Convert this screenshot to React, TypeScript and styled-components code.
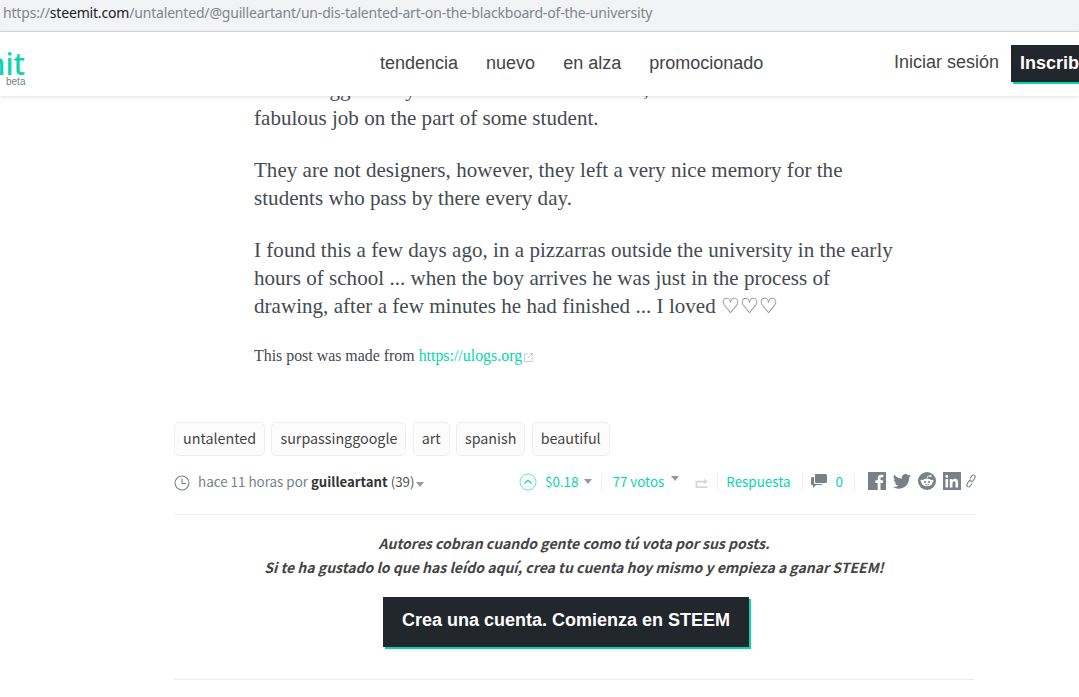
import React from 'react';
import styled, { createGlobalStyle } from 'styled-components';

const Global = createGlobalStyle`
  html, body { margin: 0; padding: 0; height: 100%; background: #fff; overflow: hidden; }
  #root { height: 697px; overflow: hidden; }
  * { box-sizing: border-box; }
`;
const Shell = styled.div`width: 1079px; height: 697px; position: relative; overflow: hidden;`;
const UrlBar = styled.div`
  height: 32px; background: #f1f3f4; border-bottom: 1px solid #d3d6e0;
  padding: 3px 0 0 3px; font: 14px/20px "Noto Sans", sans-serif; letter-spacing: -0.18px; color: #80868b; white-space: nowrap;
  b { font-weight: 400; color: #202124; }
`;
const Head = styled.header`
  position: absolute; left: 0; right: 0; top: 32px; height: 64px; background: #fff;
  box-shadow: 0 1px 4px rgba(0,0,0,.12); display: flex; align-items: center; z-index: 2;
  font-family: "Liberation Sans", sans-serif;
`;
const Logo = styled.div`
  width: 380px; flex: none; position: relative; align-self: stretch;
`;
const LogoWord = styled.span`
  position: absolute; right: 355px; top: 20px; font: 500 30px/24px "Noto Sans", sans-serif; color: #06d6a9;
`;
const Beta = styled.span`
  position: absolute; left: 6px; top: 44px; font: 10px/11px "Liberation Sans", sans-serif; color: #788187;
`;
const Nav = styled.nav`display: flex; gap: 28px; font-size: 18px; color: #444; flex: none; width: 514px; margin-top: -2px;`;
const Login = styled.span`font-size: 18px; color: #444; margin-top: -4px; width: 117px; flex: none;`;
const Signup = styled.span`
  background: #22272e; color: #fff; font-weight: 700; font-size: 18px; height: 37px; width: 80px;
  padding: 0 0 0 9px; line-height: 36px; box-shadow: 2px 2px 0 #06d6a9; margin-top: -1px; overflow: hidden; white-space: nowrap; flex: none;
`;
const Article = styled.main`
  width: 800px; margin-left: 174px; padding-top: 43px;
`;
const Body = styled.div`
  padding-left: 80px; width: 760px;
  font: 21px/28px "Liberation Serif", serif; letter-spacing: .04px; color: #444a52;
  p { margin: 0 0 24px; white-space: nowrap; }
`;
const Lead = styled.span`display: block; margin-bottom: 1px;`;
const Small = styled.p`
  && { font-size: 15.9px; line-height: 24px; letter-spacing: 0; margin: 24px 0 0; }
  a { color: #06d6a9; text-decoration: none; }
  svg { margin-left: 2px; vertical-align: -1px; }
`;
const Tags = styled.div`display: flex; gap: 6.3px; margin-top: 54px; font-family: "Noto Sans CJK JP", sans-serif;`;
const Tag = styled.span`
  height: 34px; padding: 0 8px; border: 1px solid #eee; border-radius: 5px; background: #fcfcfc;
  font-size: 14.3px; line-height: 30px; color: #444;
`;
const Meta = styled.div`
  margin-top: 6px; height: 52px; padding-bottom: 14px; display: flex; align-items: center;
  font: 13.4px/20px "Noto Sans CJK JP", sans-serif; color: #788187; white-space: nowrap;
`;
const MetaLeft = styled.div`
  width: 345px; flex: none; display: flex; align-items: center; gap: 8px;
  b { color: #333; font-weight: 700; font-size: 13.2px; }
  i { font-style: normal; color: #555; }
  svg { margin-top: 3px; }
`;
const Caret = styled.span`
  display: inline-block; border: 4px solid transparent; border-top: 5px solid #999; border-bottom: 0; vertical-align: 2px;
`;
const Slot = styled.span<{ $ml?: number; $mt?: number }>`
  display: inline-flex; align-items: center; flex: none; margin-left: ${p => p.$ml ?? 0}px; margin-top: ${p => p.$mt ?? 0}px;
`;
const Teal = styled.span`color: #06d6a9;`;
const Sep = styled.span<{ $ml: number }>`width: 1px; height: 19px; background: #eee; flex: none; margin-left: ${p => p.$ml}px;`;
const Voting = styled.div`display: flex; align-items: center; flex: none;`;
const Rule = styled.hr`border: 0; border-top: 1px solid #eee; margin: 0;`;
const Cta = styled.section`
  text-align: center; padding-top: 16px; font: italic 700 14px/24px "Noto Sans CJK JP", sans-serif; color: #444;
  display: flex; flex-direction: column; align-items: center;
`;
const CtaButton = styled.span`
  margin-top: 18px; margin-right: 16px; width: 366px; height: 50px; background: #22272e; color: #fff; box-shadow: 2px 2px 0 #06d6a9;
  font: 700 18px/46px "Liberation Sans", sans-serif; font-style: normal;
`;
const BottomRule = styled(Rule)`margin-top: 32px;`;
const Socials = styled.div`display: flex; align-items: center; gap: 7px; margin-left: 13px; flex: none;`;

const Clock = () => (
  <svg width="16" height="16" viewBox="0 0 16 16" fill="none" stroke="#788187" strokeWidth="1.1"><circle cx="8" cy="8" r="7"/><path d="M8 3.5V8.5H12"/></svg>
);
const Up = () => (
  <svg width="18" height="18" viewBox="0 0 18 18" fill="none" stroke="#06d6a9"><circle cx="9" cy="9" r="8" strokeOpacity=".6"/><path d="M5.5 10.5L9 7l3.5 3.5" strokeWidth="1.2"/></svg>
);
const Reblog = () => (
  <svg width="14" height="11" viewBox="0 0 14 12" fill="#d6d6d6"><path d="M0 4h9V1.500l4.500 3.500L9 8V6H2v4h11v2H0z"/></svg>
);
const Comment = () => (
  <svg width="16" height="15" viewBox="0 0 16 15" fill="#788187"><path d="M5 0h9.500a1.500 1.500 0 0 1 1.500 1.500v6A1.500 1.500 0 0 1 14.500 9H5.500A1.500 1.500 0 0 1 4 7.500V1.500A1 1 0 0 1 5 0z"/><path d="M3 3v5.500A1.500 1.500 0 0 0 4.500 10H11v1H5l-3 3v-3H1.500A1.500 1.500 0 0 1 0 9.500v-5A1.500 1.500 0 0 1 1.500 3z"/></svg>
);
const Fb = () => (
  <svg width="18" height="18" viewBox="0 0 18 18"><path fill="#788187" d="M0 0h18v18H0z"/><path fill="#fff" d="M12.500 18v-7h2.300l.4-2.700h-2.700V6.600c0-.8.2-1.300 1.300-1.300h1.500V2.900c-.3 0-1.100-.1-2.100-.1-2.100 0-3.500 1.300-3.500 3.600v1.900H7.400V11h2.300v7z"/></svg>
);
const Tw = () => (
  <svg width="18" height="15" viewBox="0 0 24 20" fill="#788187"><path d="M24 2.400c-.9.400-1.800.7-2.800.8 1-.6 1.800-1.600 2.200-2.700-.9.600-2 1-3.100 1.200A4.900 4.900 0 0 0 11.900 6.200 14 14 0 0 1 1.700 1 4.900 4.900 0 0 0 3.200 7.600c-.8 0-1.600-.2-2.200-.6 0 2.400 1.700 4.400 3.900 4.900-.7.200-1.500.2-2.200.1.600 2 2.400 3.400 4.600 3.400A9.900 9.900 0 0 1 0 17.400 14 14 0 0 0 7.500 19.600c9.100 0 14.300-7.700 14-14.600 1-.7 1.800-1.600 2.500-2.600z"/></svg>
);
const Reddit = () => (
  <svg width="18" height="18" viewBox="0 0 18 18"><circle cx="9" cy="9" r="9" fill="#788187"/><ellipse cx="9" cy="10.500" rx="5.500" ry="3.800" fill="#fff"/><circle cx="3.800" cy="9" r="1.300" fill="#fff"/><circle cx="14.200" cy="9" r="1.300" fill="#fff"/><circle cx="12.500" cy="4" r="1.100" fill="#fff"/><path d="M9 7l.8-3 2.500.5" stroke="#fff" strokeWidth=".7" fill="none"/><circle cx="7" cy="10" r="1" fill="#788187"/><circle cx="11" cy="10" r="1" fill="#788187"/><path d="M6.800 12.200c1.300.9 3.100.9 4.400 0" stroke="#788187" strokeWidth=".7" fill="none"/></svg>
);
const Li = () => (
  <svg width="18" height="18" viewBox="0 0 18 18"><path fill="#788187" d="M0 0h18v18H0z"/><path fill="#fff" d="M2.500 7h2.600v8.500H2.500zM3.800 2.800a1.500 1.500 0 1 1 0 3 1.500 1.500 0 0 1 0-3zM6.800 7h2.500v1.200c.4-.7 1.300-1.400 2.600-1.400 2.700 0 3.200 1.800 3.200 4.100v4.600h-2.600v-4c0-1 0-2.300-1.400-2.300s-1.600 1.100-1.600 2.200v4.100H6.800z"/></svg>
);
const Link = () => (
  <svg width="12" height="14" viewBox="0 0 12 14" fill="none" stroke="#788187" strokeWidth="1.100"><path d="M5 4.500l1.800-2.700a1.900 1.900 0 0 1 3.200 2L8 7a1.900 1.900 0 0 1-2.500.6"/><path d="M7 9.500l-1.800 2.700a1.900 1.900 0 0 1-3.200-2L4 7a1.900 1.900 0 0 1 2.500-.6"/></svg>
);
const Ext = () => (
  <svg width="9" height="9" viewBox="0 0 9 9" fill="none" stroke="#ccc"><path d="M4 1H.5v7.500H8V5"/><path d="M4 5l4-4M5.500.5h3v3"/></svg>
);

export default function App() {
  return (
    <Shell>
      <Global />
      <UrlBar><span>https://</span><b>steemit.com</b>/untalented/@guilleartant/un-dis-talented-art-on-the-blackboard-of-the-university</UrlBar>
      <Head>
        <Logo><LogoWord>steemit</LogoWord><Beta>beta</Beta></Logo>
        <Nav><span>tendencia</span><span>nuevo</span><span>en alza</span><span>promocionado</span></Nav>
        <Login>Iniciar sesión</Login>
        <Signup>Inscribete</Signup>
      </Head>
      <Article>
        <Body>
          <p><Lead>Those suggest they are made with white chalk, and it</Lead>fabulous job on the part of some student.</p>
          <p>They are not designers, however, they left a very nice memory for the<br/>students who pass by there every day.</p>
          <p>I found this a few days ago, in a pizzarras outside the university in the early<br/>hours of school ... when the boy arrives he was just in the process of<br/>drawing, after a few minutes he had finished ... I loved ♡♡♡</p>
          <Small>This post was made from <a>https://ulogs.org</a><Ext /></Small>
        </Body>
        <Tags>
          {['untalented','surpassinggoogle','art','spanish','beautiful'].map(t => <Tag key={t}>{t}</Tag>)}
        </Tags>
        <Meta>
          <MetaLeft><Clock /><span>hace 11 horas por <b>guilleartant</b> <i>(39)</i><Slot $ml={1}><Caret /></Slot></span></MetaLeft>
          <Voting>
            <Slot $mt={2}><Up /></Slot>
            <Slot $ml={8}><Teal>$0.18</Teal></Slot>
            <Slot $ml={6}><Caret /></Slot>
            <Sep $ml={9} />
            <Slot $ml={10}><Teal>77 votos</Teal></Slot>
            <Slot $ml={7} $mt={-6}><Caret /></Slot>
            <Slot $ml={16} $mt={3}><Reblog /></Slot>
            <Sep $ml={8} />
            <Slot $ml={8}><Teal>Respuesta</Teal></Slot>
            <Sep $ml={12} />
            <Slot $ml={8}><Comment /></Slot>
            <Slot $ml={8}><Teal>0</Teal></Slot>
            <Sep $ml={11} />
          </Voting>
          <Socials><Fb /><Tw /><Reddit /><Li /><Slot $ml={-3}><Link /></Slot></Socials>
        </Meta>
        <Rule />
        <Cta>
          <span>Autores cobran cuando gente como tú vota por sus posts.</span>
          <span>Si te ha gustado lo que has leído aquí, crea tu cuenta hoy mismo y empieza a ganar STEEM!</span>
          <CtaButton>Crea una cuenta. Comienza en STEEM</CtaButton>
        </Cta>
        <BottomRule />
      </Article>
    </Shell>
  );
}
